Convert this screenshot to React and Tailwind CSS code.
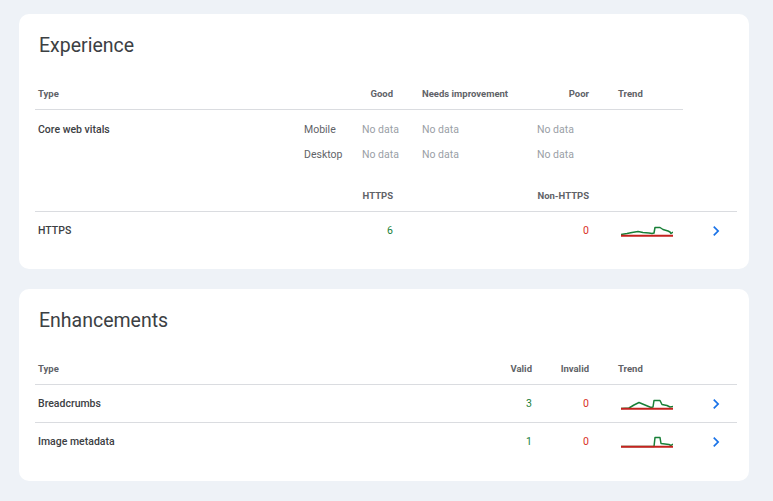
import React from 'react';

const Chevron = () => (
  <svg width="20" height="20" viewBox="0 0 24 24" className="text-[#1a73e8]">
    <path d="M10 6L8.59 7.41 13.17 12l-4.58 4.59L10 18l6-6z" fill="currentColor" />
  </svg>
);

const Spark = ({ d }) => (
  <svg width="52" height="12" viewBox="0 0 52 12" className="block">
    <path d={d} fill="none" stroke="#188038" strokeWidth="1.5" strokeLinejoin="round" />
    <line x1="0" y1="10.8" x2="52" y2="10.8" stroke="#c5221f" strokeWidth="2" />
  </svg>
);

const trends = {
  https: 'M0 9.5 L6 8.5 L11 7.5 L17 6.5 L22 7.5 L28 8 L31 8.5 L33 8 L34 2.5 L39 2.5 L42 4.5 L47 6 L49 7 L50 8.5 L52 7',
  breadcrumbs: 'M0 10.5 L8 10 L13 7 L18 4.5 L24 7 L30 9.5 L32 9 L33 2.5 L39 2.5 L41 6.5 L46 7.5 L49 9 L52 8.5',
  image: 'M0 10.5 L33 10.5 L34 1.5 L39 1.5 L40 7.5 L48 8.5 L50 9.5 L52 8',
};

const Card = ({ title, children }) => (
  <div className="ml-[19px] w-[730px] rounded-[10px] bg-white pl-4 pr-3 pt-[18px] pb-5">
    <h2 className="pl-[4px] text-[19.5px] leading-[28px] text-[#3c4043]">{title}</h2>
    <div className="mt-[18px]">{children}</div>
  </div>
);

const head = 'pt-[2px] text-[9.5px] font-bold text-[#5f6368]';
const name = 'text-[10.5px] font-medium text-[#3c4043]';
const nodata = 'text-[10.5px] text-[#9aa0a6]';

const vitals = [
  { label: 'Core web vitals', device: 'Mobile' },
  { label: '', device: 'Desktop' },
];

const enhancements = [
  { label: 'Breadcrumbs', valid: 3, invalid: 0, trend: trends.breadcrumbs },
  { label: 'Image metadata', valid: 1, invalid: 0, trend: trends.image },
];

export default function App() {
  return (
    <div className="min-h-screen bg-[#eef2f7] pt-[14px] pb-5" style={{ fontFamily: 'Roboto, "Liberation Sans", sans-serif' }}>
      <Card title="Experience">
        <div className={`flex h-[32px] w-[648px] items-center border-b border-[#dadce0] ${head}`}>
          <div className="w-[327px] pl-[3px]">Type</div>
          <div className="w-[31px] text-right">Good</div>
          <div className="ml-[29px] w-[115px]">Needs improvement</div>
          <div className="w-[52px] text-right">Poor</div>
          <div className="ml-[29px]">Trend</div>
        </div>
        <div className="pt-[7px]">
          {vitals.map((v) => (
            <div key={v.device} className="flex h-[25px] items-center">
              <div className={`w-[269px] pl-[3px] ${name}`}>{v.label}</div>
              <div className="w-[58px] text-[10.5px] text-[#5f6368]">{v.device}</div>
              <div className={`w-[60px] ${nodata}`}>No data</div>
              <div className={`w-[115px] ${nodata}`}>No data</div>
              <div className={nodata}>No data</div>
            </div>
          ))}
        </div>
        <div className={`mt-[13px] flex h-[32px] w-[702px] items-center border-b border-[#dadce0] ${head}`}>
          <div className="w-[358px] text-right">HTTPS</div>
          <div className="w-[196px] text-right">Non-HTTPS</div>
        </div>
        <div className="flex h-[37px] w-[702px] items-center">
          <div className={`w-[322px] pl-[3px] ${name}`}>HTTPS</div>
          <div className="w-[36px] text-right text-[10.5px] text-[#188038]">6</div>
          <div className="w-[196px] text-right text-[10.5px] text-[#d93025]">0</div>
          <div className="ml-[32px]">
            <Spark d={trends.https} />
          </div>
          <div className="ml-[33px]">
            <Chevron />
          </div>
        </div>
      </Card>

      <div className="mt-[20px]">
        <Card title="Enhancements">
          <div className={`flex h-[32px] w-[702px] items-center border-b border-[#dadce0] ${head}`}>
            <div className="w-[40px] pl-[3px]">Type</div>
            <div className="w-[457px] text-right">Valid</div>
            <div className="w-[57px] text-right">Invalid</div>
            <div className="ml-[29px]">Trend</div>
          </div>
          {enhancements.map((r, i) => (
            <div
              key={r.label}
              className={`flex h-[38px] w-[702px] items-center ${i < enhancements.length - 1 ? 'border-b border-[#dadce0]' : ''}`}
            >
              <div className={`w-[457px] pl-[3px] ${name}`}>{r.label}</div>
              <div className="w-[40px] text-right text-[10.5px] text-[#188038]">{r.valid}</div>
              <div className="w-[57px] text-right text-[10.5px] text-[#d93025]">{r.invalid}</div>
              <div className="ml-[32px]">
                <Spark d={r.trend} />
              </div>
              <div className="ml-[33px]">
                <Chevron />
              </div>
            </div>
          ))}
        </Card>
      </div>
    </div>
  );
}
